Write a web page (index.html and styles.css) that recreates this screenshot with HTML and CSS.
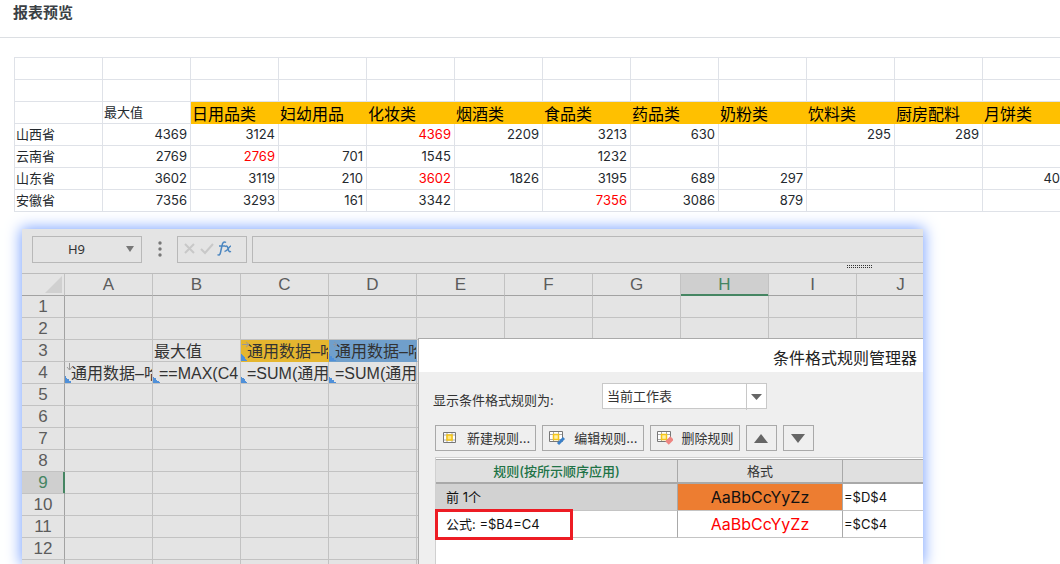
FILE: index.html
```html
<!DOCTYPE html>
<html lang="zh-CN">
<head>
<meta charset="utf-8">
<title>报表预览</title>
<link rel="stylesheet" href="styles.css">
</head>
<body>
<main class="page">
  <header class="page-header"><h1>报表预览</h1></header>

  <div class="report-wrap">
    <table class="report">
      <tbody>
        <tr><td></td><td></td><td></td><td></td><td></td><td></td><td></td><td></td><td></td><td></td><td></td><td></td></tr>
        <tr><td></td><td></td><td></td><td></td><td></td><td></td><td></td><td></td><td></td><td></td><td></td><td></td></tr>
        <tr><td></td><th class="plain" scope="col">最大值</th><th scope="col">日用品类</th><th scope="col">妇幼用品</th><th scope="col">化妆类</th><th scope="col">烟酒类</th><th scope="col">食品类</th><th scope="col">药品类</th><th scope="col">奶粉类</th><th scope="col">饮料类</th><th scope="col">厨房配料</th><th scope="col">月饼类</th></tr>
        <tr><th class="plain" scope="row">山西省</th><td>4369</td><td>3124</td><td></td><td class="max">4369</td><td>2209</td><td>3213</td><td>630</td><td></td><td>295</td><td>289</td><td></td></tr>
        <tr><th class="plain" scope="row">云南省</th><td>2769</td><td class="max">2769</td><td>701</td><td>1545</td><td></td><td>1232</td><td></td><td></td><td></td><td></td><td></td></tr>
        <tr><th class="plain" scope="row">山东省</th><td>3602</td><td>3119</td><td>210</td><td class="max">3602</td><td>1826</td><td>3195</td><td>689</td><td>297</td><td></td><td></td><td class="edge">40</td></tr>
        <tr><th class="plain" scope="row">安徽省</th><td>7356</td><td>3293</td><td>161</td><td>3342</td><td></td><td class="max">7356</td><td>3086</td><td>879</td><td></td><td></td><td></td></tr>
      </tbody>
    </table>
  </div>

  <section class="sheet-panel" aria-label="工作表">
    <div class="sheet-clip">
      <div class="formula-bar">
        <button class="name-box" type="button"><span class="name">H9</span>
          <svg width="8" height="6" viewBox="0 0 8 6"><path d="M0 0h8L4 6z" fill="#777"/></svg>
        </button>
        <svg class="dots" width="4" height="16" viewBox="0 0 4 16" fill="#777"><circle cx="2" cy="2" r="1.7"/><circle cx="2" cy="8" r="1.7"/><circle cx="2" cy="14" r="1.7"/></svg>
        <div class="fx-box">
          <svg width="54" height="18" viewBox="0 0 54 18" fill="none">
            <path d="M2 4l9 9M11 4l-9 9" stroke="#c8c8c8" stroke-width="2"/>
            <path d="M18 9l4 4 8-9" stroke="#c8c8c8" stroke-width="2"/>
            <path d="M43 2.500c-2-1.500-3.500 0-4 3l-1.500 7c-.5 2.500-1.500 3-3 2.200M36 6h6" stroke="#4b86c0" stroke-width="1.500"/>
            <path d="M42 6.500c2-1 2.500 0 3 2s1 4 3 2.800M48 6c-2 0-3.500 5.500-6.500 5.500" stroke="#4b86c0" stroke-width="1.500"/>
          </svg>
        </div>
        <input class="formula-input" type="text" aria-label="公式">
        <svg class="grip" width="26" height="4" viewBox="0 0 26 4"><path d="M0 .5h26M0 2.500h26" stroke="#333" stroke-dasharray="1 1"/></svg>
      </div>

      <table class="grid">
        <thead>
          <tr><th class="corner"><svg width="17" height="17" viewBox="0 0 17 17"><path d="M17 0v17H0z" fill="#d0d0d0"/></svg></th><th>A</th><th>B</th><th>C</th><th>D</th><th>E</th><th>F</th><th>G</th><th class="active">H</th><th>I</th><th>J</th></tr>
        </thead>
        <tbody>
          <tr><th>1</th><td></td><td></td><td></td><td></td><td></td><td></td><td></td><td></td><td></td><td></td></tr>
          <tr><th>2</th><td></td><td></td><td></td><td></td><td></td><td></td><td></td><td></td><td></td><td></td></tr>
          <tr><th>3</th><td></td><td class="label">最大值</td>
            <td class="bound gold"><svg class="dir" width="8" height="7" viewBox="0 0 8 7"><path d="M0 3.500h7M4 1l3 2.500L4 6" stroke="#999" fill="none"/></svg>通用数据–哈</td>
            <td class="bound blue"><svg class="dir" width="8" height="7" viewBox="0 0 8 7"><path d="M3 3.500h4M4 1l3 2.500L4 6" stroke="#8a97a6" fill="none"/></svg>通用数据–哈</td>
            <td></td><td></td><td></td><td></td><td></td><td></td></tr>
          <tr><th>4</th>
            <td class="bound"><svg class="dir" width="7" height="8" viewBox="0 0 7 8"><path d="M3.500 0v7M1 4l2.500 3L6 4" stroke="#999" fill="none"/></svg>通用数据–哈</td>
            <td class="bound">==MAX(C4</td><td class="bound">=SUM(通用</td><td class="bound">=SUM(通用</td>
            <td></td><td></td><td></td><td></td><td></td><td></td></tr>
          <tr><th>5</th><td></td><td></td><td></td><td></td><td></td><td></td><td></td><td></td><td></td><td></td></tr>
          <tr><th>6</th><td></td><td></td><td></td><td></td><td></td><td></td><td></td><td></td><td></td><td></td></tr>
          <tr><th>7</th><td></td><td></td><td></td><td></td><td></td><td></td><td></td><td></td><td></td><td></td></tr>
          <tr><th>8</th><td></td><td></td><td></td><td></td><td></td><td></td><td></td><td></td><td></td><td></td></tr>
          <tr><th class="active">9</th><td></td><td></td><td></td><td></td><td></td><td></td><td></td><td></td><td></td><td></td></tr>
          <tr><th>10</th><td></td><td></td><td></td><td></td><td></td><td></td><td></td><td></td><td></td><td></td></tr>
          <tr><th>11</th><td></td><td></td><td></td><td></td><td></td><td></td><td></td><td></td><td></td><td></td></tr>
          <tr><th>12</th><td></td><td></td><td></td><td></td><td></td><td></td><td></td><td></td><td></td><td></td></tr>
          <tr><th></th><td></td><td></td><td></td><td></td><td></td><td></td><td></td><td></td><td></td><td></td></tr>
        </tbody>
      </table>

      <section class="dialog" role="dialog" aria-labelledby="dialog-title">
        <h2 id="dialog-title" class="dialog-title">条件格式规则管理器</h2>
        <div class="dialog-body">
          <div class="scope">
            <label for="scope">显示条件格式规则为:</label>
            <div class="select">
              <select id="scope"><option>当前工作表</option></select>
              <span class="select-arrow"><svg width="11" height="6" viewBox="0 0 11 6"><path d="M0 0h11L5.500 6z" fill="#666"/></svg></span>
            </div>
          </div>
          <div class="toolbar">
            <button type="button" class="tool">
              <svg width="16" height="16" viewBox="0 0 16 16" fill="none"><path d="M1.500 2.500h12v10h-12z" fill="#fff" stroke="#777"/><path d="M5 3v9M10 3v9M2 5h11M2 10h11" stroke="#aaa"/><path d="M5 5h5v5H5z" fill="#ffe680" stroke="#f5c518" stroke-width="1.500"/></svg>
              <span>新建规则...</span></button>
            <button type="button" class="tool">
              <svg width="16" height="16" viewBox="0 0 16 16" fill="none"><path d="M.5 1.500h13v10H.5z" fill="#fff" stroke="#777"/><path d="M4.500 2v9M9.500 2v9M1 4.500h12M1 9.500h12" stroke="#aaa"/><path d="M4.500 4.500h5v5h-5z" fill="#fff1a8" stroke="#f5c518" stroke-width="1.500"/><path d="M9 14l6-6" stroke="#3b80c8" stroke-width="3"/></svg>
              <span>编辑规则...</span></button>
            <button type="button" class="tool">
              <svg width="16" height="16" viewBox="0 0 16 16" fill="none"><path d="M.5 1.500h13v10H.5z" fill="#fff" stroke="#777"/><path d="M4.500 2v9M9.500 2v9M1 4.500h12M1 9.500h12" stroke="#aaa"/><path d="M4.500 4.500h5v5h-5z" fill="#fff1a8" stroke="#f5c518" stroke-width="1.500"/><path d="M10 13l5-5" stroke="#ee8581" stroke-width="5"/></svg>
              <span>删除规则</span></button>
            <button type="button" class="tool move" aria-label="上移"><svg width="14" height="9" viewBox="0 0 14 9"><path d="M7 0l7 9H0z" fill="#666"/></svg></button>
            <button type="button" class="tool move" aria-label="下移"><svg width="14" height="9" viewBox="0 0 14 9"><path d="M0 0h14L7 9z" fill="#666"/></svg></button>
          </div>
          <div class="rules">
            <table class="rule-table">
              <thead><tr><th class="col-rule">规则(按所示顺序应用)</th><th class="col-format">格式</th><th></th></tr></thead>
              <tbody>
                <tr class="selected"><td>前 1个</td><td class="sample orange">AaBbCcYyZz</td><td class="range">=$D$4</td></tr>
                <tr><td><span class="highlight"></span>公式: =$B4=C4</td><td class="sample red">AaBbCcYyZz</td><td class="range">=$C$4</td></tr>
              </tbody>
            </table>
          </div>
        </div>
      </section>
    </div>
  </section>
</main>
</body>
</html>
```

FILE: styles.css
```css
* { box-sizing: border-box; }

body {
  margin: 0;
  background: #fff;
  color: #24292e;
  font: 13px/21px Inter, "Noto Sans CJK SC", sans-serif;
}

button, input, select { font: inherit; color: inherit; margin: 0; }
svg { display: block; flex: none; }
th { font-weight: 400; }

.page {
  display: flex;
  flex-direction: column;
  height: 100vh;
  overflow: hidden;
}

.page-header {
  flex: none;
  padding: 0 13px 12px;
  border-bottom: 1px solid #dcdfe3;
}
.page-header h1 {
  margin: 0;
  font-size: 15px;
  line-height: 25px;
  font-weight: 700;
  color: #3a3f45;
}

/* Report preview */
.report-wrap {
  flex: none;
  padding: 19px 0 0 14px;
  overflow: hidden;
}
.report {
  width: 1057px;
  table-layout: fixed;
  border-collapse: separate;
  border-spacing: 0;
  border-top: 1px solid #dfe2e8;
  border-left: 1px solid #dfe2e8;
}
.report td, .report th {
  height: 22px;
  padding: 0 3px;
  border-right: 1px solid #dfe2e8;
  border-bottom: 1px solid #dfe2e8;
  text-align: right;
  white-space: nowrap;
}
.report th {
  padding: 3px 1px 0;
  border-color: #ffc000;
  background: #ffc000;
  color: #000;
  font-size: 16px;
  line-height: 18px;
  text-align: left;
}
.report .plain {
  padding: 0 1px;
  border-color: #dfe2e8;
  background: none;
  color: #24292e;
  font-size: 13px;
  line-height: 21px;
}
.report .max { color: #f00; }
.report .edge { padding-right: 10px; }

/* Worksheet */
.sheet-panel {
  flex: 1;
  min-height: 0;
  margin: 17px 137px 0 22px;
  background: #e4e4e4;
  box-shadow: 0 0 14px 1px #7aa2ff;
}
.sheet-clip {
  position: relative;
  height: 100%;
  overflow: hidden;
}

.formula-bar {
  position: relative;
  display: flex;
  align-items: center;
  height: 45px;
  padding: 0 0 4px 10px;
  border-bottom: 1px solid #bcbcbc;
}
.name-box {
  display: flex;
  align-items: center;
  width: 110px;
  height: 27px;
  padding: 0 7px 0 0;
  border: 1px solid #b8b8b8;
  background: none;
  color: #333;
  font-family: "Noto Sans", sans-serif;
}
.name { flex: 1; padding-right: 6px; }
.dots { margin: 0 15px 0 16px; }
.fx-box {
  display: flex;
  width: 70px;
  height: 27px;
  padding: 3px 5px;
  border: 1px solid #b8b8b8;
}
.formula-input {
  flex: 1;
  height: 27px;
  margin-left: 5px;
  border: 1px solid #b8b8b8;
  border-right: 0;
  background: none;
}
.grip { position: absolute; right: 50px; bottom: 4px; }

.grid {
  width: 923px;
  table-layout: fixed;
  border-collapse: separate;
  border-spacing: 0;
  color: #333;
  font-family: "Liberation Sans", "Noto Sans CJK SC", sans-serif;
  font-size: 16px;
}
.grid th, .grid td {
  height: 22px;
  padding: 0;
  overflow: hidden;
  border-right: 1px solid #c2c2c2;
  border-bottom: 1px solid #c2c2c2;
  white-space: nowrap;
}
.grid th {
  color: #5c5c5c;
  font-size: 17px;
  line-height: 20px;
}
.grid thead th { border-bottom-color: #a2a2a2; }
.grid tbody th { border-right-color: #a2a2a2; }
.grid .corner { width: 43px; padding-left: 23px; }
.grid th.active { background: #cfcfcf; color: #458562; }
.grid thead th.active { border-bottom-color: #458562; box-shadow: inset 0 -1px #458562; }
.grid tbody th.active { border-right-color: #458562; box-shadow: inset -1px 0 #458562; }
.grid .label { padding: 3px 0 0 1px; line-height: 18px; }
.grid .bound {
  position: relative;
  padding: 3px 0 0 6px;
  line-height: 18px;
  background: linear-gradient(45deg, #4f90d9 50%, transparent 50%) left bottom / 7px 7px no-repeat;
}
.grid .gold { background-color: #e5b62f; border-color: #e5b62f; }
.grid .blue { background-color: #709fcb; border-color: #709fcb; }
.dir { position: absolute; top: 1px; left: 1px; }

/* Rule manager dialog */
.dialog {
  position: absolute;
  top: 109px;
  right: 0;
  bottom: 0;
  left: 396px;
  display: flex;
  flex-direction: column;
  border-top: 1px solid #aaa;
  border-left: 1px solid #aaa;
  background: #efefef;
}
.dialog-title {
  flex: none;
  margin: 0;
  padding: 5px 6px 0 0;
  background: #fff;
  color: #222;
  font-size: 16px;
  font-weight: 400;
  line-height: 28px;
  text-align: right;
}
.dialog-body {
  flex: 1;
  display: flex;
  flex-direction: column;
  min-height: 0;
  padding: 11px 0 0 16px;
  color: #333;
}
.scope {
  display: flex;
  margin-bottom: 14px;
}
.scope label {
  width: 167px;
  margin-left: -2px;
  padding-top: 7px;
}
.select { position: relative; width: 165px; margin-left: 2px; }
.select select {
  display: block;
  width: 100%;
  height: 26px;
  padding: 0 24px 0 4px;
  border: 1px solid #c8c8c8;
  border-radius: 0;
  background: #fff;
  appearance: none;
}
.select-arrow {
  position: absolute;
  top: 1px;
  right: 1px;
  bottom: 1px;
  display: flex;
  align-items: center;
  justify-content: center;
  width: 20px;
  border-left: 1px solid #c8c8c8;
  pointer-events: none;
}
.toolbar { display: flex; gap: 6px; margin-bottom: 6px; }
.tool {
  display: flex;
  align-items: center;
  gap: 9px;
  height: 26px;
  padding: 0 5px 0 6px;
  border: 1px solid #a9a9a9;
  background: #efefef;
  line-height: 18px;
  white-space: nowrap;
}
.move { justify-content: center; width: 31px; padding: 0; }

.rules {
  flex: 1;
  min-height: 0;
  padding-top: 1px;
  border-top: 1px solid #d0d0d0;
  border-left: 1px solid #d0d0d0;
  background: #fff;
}
.rule-table {
  width: 100%;
  table-layout: fixed;
  border-collapse: separate;
  border-spacing: 0;
  color: #111;
}
.rule-table th {
  height: 25px;
  padding: 0;
  border-top: 1px solid #a9a9a9;
  border-right: 1px solid #a9a9a9;
  border-bottom: 2px solid #a9a9a9;
  background: #e0e0e0;
  color: #333;
}
.rule-table .col-rule { width: 242px; color: #217346; font-weight: 500; }
.rule-table .col-format { width: 165px; }
.rule-table td {
  position: relative;
  height: 27px;
  padding: 0 0 0 10px;
  border-right: 1px solid #a9a9a9;
  border-bottom: 1px solid #c4c4c4;
}
.rule-table th:last-child, .rule-table td:last-child { border-right: 0; }
.selected td:first-child { background: #d2d2d2; }
.rule-table .sample { padding: 0; font-size: 16px; text-align: center; }
.rule-table .orange { background: #ed7d31; }
.rule-table .red { color: #f00; }
.rule-table .range { padding-left: 1px; }
.highlight {
  position: absolute;
  top: -2px;
  left: -1px;
  width: 138px;
  height: 31px;
  border: 3px solid #ed1c24;
}
```
